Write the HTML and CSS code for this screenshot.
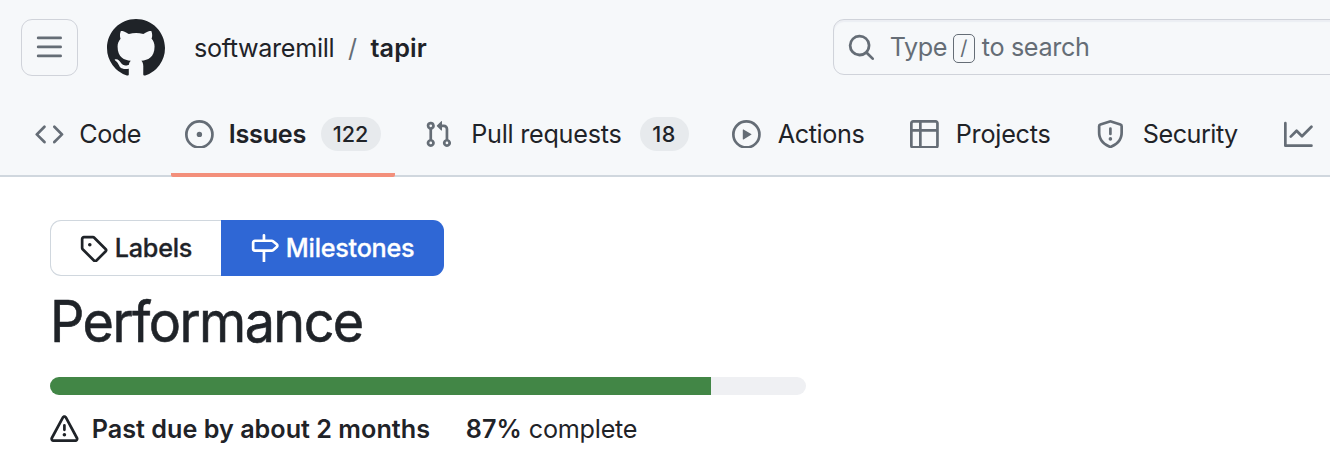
FILE: index.html
```html
<!DOCTYPE html>
<html lang="en">
<head>
<meta charset="utf-8">
<title>Performance Milestone · softwaremill/tapir</title>
<link rel="stylesheet" href="styles.css">
</head>
<body>
<header class="header">
  <div class="topbar">
    <button class="menu-button" aria-label="Menu"><svg class="icon" viewBox="0 0 16 16"><path d="M1 2.75A.75.75 0 0 1 1.75 2h12.5a.75.75 0 0 1 0 1.5H1.75A.75.75 0 0 1 1 2.75Zm0 5A.75.75 0 0 1 1.75 7h12.5a.75.75 0 0 1 0 1.5H1.75A.75.75 0 0 1 1 7.75ZM1.75 12h12.5a.75.75 0 0 1 0 1.5H1.75a.75.75 0 0 1 0-1.5Z"/></svg></button>
    <svg class="logo" viewBox="0 0 16 16"><path d="M8 0c4.42 0 8 3.58 8 8a8.013 8.013 0 0 1-5.45 7.59c-.4.08-.55-.17-.55-.38 0-.27.01-1.13.01-2.2 0-.75-.25-1.23-.54-1.48 1.78-.2 3.65-.88 3.65-3.95 0-.88-.31-1.59-.82-2.15.08-.2.36-1.02-.08-2.12 0 0-.67-.22-2.2.82-.64-.18-1.32-.27-2-.27-.68 0-1.36.09-2 .27-1.53-1.03-2.2-.82-2.2-.82-.44 1.1-.16 1.92-.08 2.12-.51.56-.82 1.28-.82 2.15 0 3.06 1.86 3.75 3.64 3.95-.23.2-.44.55-.51 1.07-.46.21-1.61.55-2.33-.66-.15-.24-.6-.83-1.23-.82-.67.01-.27.38.01.53.34.19.73.9.82 1.13.16.45.68 1.31 2.69.94 0 .67.01 1.3.01 1.49 0 .21-.15.45-.55.38A7.995 7.995 0 0 1 0 8c0-4.42 3.58-8 8-8Z"/></svg>
    <div class="crumbs"><span class="owner">softwaremill</span><span class="slash">/</span><strong class="repo">tapir</strong></div>
    <div class="search"><svg class="icon" viewBox="0 0 16 16"><path d="M10.68 11.74a6 6 0 0 1-7.922-8.982 6 6 0 0 1 8.982 7.922l3.04 3.04a.749.749 0 0 1-.326 1.275.749.749 0 0 1-.734-.215ZM11.5 7a4.499 4.499 0 1 0-8.997 0A4.499 4.499 0 0 0 11.5 7Z"/></svg><span class="type">Type</span><kbd class="key">/</kbd><span class="hint">to search</span></div>
  </div>
  <nav class="tabs">
    <a class="tab code"><svg class="icon" viewBox="0 0 16 16"><path d="m11.28 3.22 4.25 4.25a.75.75 0 0 1 0 1.06l-4.25 4.25a.749.749 0 0 1-1.275-.326.749.749 0 0 1 .215-.734L13.94 8l-3.72-3.72a.749.749 0 0 1 .326-1.275.749.749 0 0 1 .734.215Zm-6.56 0a.751.751 0 0 1 1.042.018.751.751 0 0 1 .018 1.042L2.06 8l3.72 3.72a.749.749 0 0 1-.326 1.275.749.749 0 0 1-.734-.215L.47 8.53a.75.75 0 0 1 0-1.06Z"/></svg><span>Code</span></a>
    <a class="tab issues"><svg class="icon" viewBox="0 0 16 16"><path d="M8 9.5a1.5 1.5 0 1 0 0-3 1.5 1.5 0 0 0 0 3Z"/><path d="M8 0a8 8 0 1 1 0 16A8 8 0 0 1 8 0ZM1.5 8a6.5 6.5 0 1 0 13 0 6.5 6.5 0 0 0-13 0Z"/></svg><span>Issues</span><span class="count">122</span></a>
    <a class="tab pulls"><svg class="icon" viewBox="0 0 16 16"><path d="M1.5 3.25a2.25 2.25 0 1 1 3 2.122v5.256a2.251 2.251 0 1 1-1.5 0V5.372A2.25 2.25 0 0 1 1.5 3.25Zm5.677-.177L9.573.677A.25.25 0 0 1 10 .854V2.5h1A2.5 2.5 0 0 1 13.5 5v5.628a2.251 2.251 0 1 1-1.5 0V5a1 1 0 0 0-1-1h-1v1.646a.25.25 0 0 1-.427.177L7.177 3.427a.25.25 0 0 1 0-.354ZM3.75 2.5a.75.75 0 1 0 0 1.5.75.75 0 0 0 0-1.5Zm0 9.5a.75.75 0 1 0 0 1.5.75.75 0 0 0 0-1.5Zm8.25.75a.75.75 0 1 0 1.5 0 .75.75 0 0 0-1.5 0Z"/></svg><span>Pull requests</span><span class="count">18</span></a>
    <a class="tab actions"><svg class="icon" viewBox="0 0 16 16"><path d="M8 0a8 8 0 1 1 0 16A8 8 0 0 1 8 0ZM1.5 8a6.5 6.5 0 1 0 13 0 6.5 6.5 0 0 0-13 0Zm4.879-2.773 4.264 2.559a.25.25 0 0 1 0 .428l-4.264 2.559A.25.25 0 0 1 6 10.559V5.442a.25.25 0 0 1 .379-.215Z"/></svg><span>Actions</span></a>
    <a class="tab projects"><svg class="icon" viewBox="0 0 16 16"><path d="M0 1.75C0 .784.784 0 1.75 0h12.5C15.216 0 16 .784 16 1.75v12.5A1.75 1.75 0 0 1 14.25 16H1.75A1.75 1.75 0 0 1 0 14.25ZM6.5 6.5v8h7.75a.25.25 0 0 0 .25-.25V6.5Zm8-1.5V1.75a.25.25 0 0 0-.25-.25H6.5V5Zm-13 1.5v7.75c0 .138.112.25.25.25H5v-8ZM5 5V1.5H1.75a.25.25 0 0 0-.25.25V5Z"/></svg><span>Projects</span></a>
    <a class="tab security"><svg class="icon" viewBox="0 0 16 16"><path d="M7.467.133a1.748 1.748 0 0 1 1.066 0l5.25 1.68A1.75 1.75 0 0 1 15 3.48V7c0 1.566-.32 3.182-1.303 4.682-.983 1.498-2.585 2.813-5.032 3.855a1.697 1.697 0 0 1-1.33 0c-2.447-1.042-4.049-2.357-5.032-3.855C1.32 10.182 1 8.566 1 7V3.48a1.75 1.75 0 0 1 1.217-1.667Zm.61 1.429a.25.25 0 0 0-.153 0l-5.25 1.68a.25.25 0 0 0-.174.238V7c0 1.358.275 2.666 1.057 3.86.784 1.194 2.121 2.34 4.366 3.297a.196.196 0 0 0 .154 0c2.245-.956 3.582-2.104 4.366-3.298C13.225 9.666 13.5 8.36 13.5 7V3.48a.251.251 0 0 0-.174-.237l-5.25-1.68ZM8.75 4.75v3a.75.75 0 0 1-1.5 0v-3a.75.75 0 0 1 1.5 0ZM9 10.5a1 1 0 1 1-2 0 1 1 0 0 1 2 0Z"/></svg><span>Security</span></a>
    <a class="tab insights"><svg class="icon" viewBox="0 0 16 16"><path d="M1.5 1.75V13.5h13.75a.75.75 0 0 1 0 1.5H.75a.75.75 0 0 1-.75-.75V1.75a.75.75 0 0 1 1.5 0Zm14.28 2.53-5.25 5.25a.75.75 0 0 1-1.06 0L7 7.06 4.28 9.78a.751.751 0 0 1-1.042-.018.751.751 0 0 1-.018-1.042l3.25-3.25a.75.75 0 0 1 1.06 0L10 7.94l4.72-4.72a.751.751 0 0 1 1.042.018.751.751 0 0 1 .018 1.042Z"/></svg></a>
  </nav>
</header>
<main class="content">
  <div class="subnav">
    <a class="subnav-item labels"><svg class="icon" viewBox="0 0 16 16"><path d="M1 7.775V2.75C1 1.784 1.784 1 2.75 1h5.025c.464 0 .91.184 1.238.513l6.25 6.25a1.75 1.75 0 0 1 0 2.474l-5.026 5.026a1.75 1.75 0 0 1-2.474 0l-6.25-6.25A1.752 1.752 0 0 1 1 7.775Zm1.5 0c0 .066.026.13.073.177l6.25 6.25a.25.25 0 0 0 .354 0l5.025-5.025a.25.25 0 0 0 0-.354l-6.25-6.25a.25.25 0 0 0-.177-.073H2.75a.25.25 0 0 0-.25.25ZM6 5a1 1 0 1 1 0 2 1 1 0 0 1 0-2Z"/></svg><span>Labels</span></a>
    <a class="subnav-item milestones"><svg class="icon" viewBox="0 0 16 16"><path d="M7.75 0a.75.75 0 0 1 .75.75V3h3.634c.414 0 .814.147 1.13.414l2.07 1.75a1.75 1.75 0 0 1 0 2.672l-2.07 1.75a1.75 1.75 0 0 1-1.13.414H8.5v5.25a.75.75 0 0 1-1.5 0V10H2.75A1.75 1.75 0 0 1 1 8.25v-3.5C1 3.784 1.784 3 2.75 3H7V.75A.75.75 0 0 1 7.75 0Zm4.384 8.5a.25.25 0 0 0 .161-.06l2.07-1.75a.248.248 0 0 0 0-.38l-2.07-1.75a.25.25 0 0 0-.161-.06H2.75a.25.25 0 0 0-.25.25v3.5c0 .138.112.25.25.25Z"/></svg><span>Milestones</span></a>
  </div>
  <h1 class="title">Performance</h1>
  <div class="progress"><div class="progress-value" style="width: 87.4%"></div></div>
  <div class="status">
    <svg class="icon" viewBox="0 0 16 16"><path d="M6.457 1.047c.659-1.234 2.427-1.234 3.086 0l6.082 11.378A1.75 1.75 0 0 1 14.082 15H1.918a1.75 1.75 0 0 1-1.543-2.575Zm1.763.707a.25.25 0 0 0-.44 0L1.698 13.132a.25.25 0 0 0 .22.368h12.164a.25.25 0 0 0 .22-.368Zm.53 3.996v2.5a.75.75 0 0 1-1.5 0v-2.5a.75.75 0 0 1 1.5 0ZM9 11a1 1 0 1 1-2 0 1 1 0 0 1 2 0Z"/></svg>
    <strong class="due">Past due by about 2 months</strong>
    <strong class="percent">87%</strong>
    <span class="complete">complete</span>
  </div>
</main>
</body>
</html>
```
FILE: styles.css
```css
* { box-sizing: border-box; }
body {
  margin: 0;
  width: 1330px;
  height: 464px;
  overflow: hidden;
  background: #fff;
  color: #1f2328;
  font: 400 25.2px/36px Inter, "Liberation Sans", sans-serif;
  letter-spacing: -0.25px;
  white-space: nowrap;
}
.icon { width: 28.8px; height: 28.8px; flex: none; fill: #656d76; }
.header {
  height: 177px;
  background: linear-gradient(#d0d7de, #d0d7de) bottom / 100% 2px no-repeat #f6f8fa;
  overflow: hidden;
}
.topbar { display: flex; height: 95px; padding: 19px 0 0 21px; }
.topbar > * { flex: none; }
.menu-button {
  display: flex;
  align-items: center;
  justify-content: center;
  width: 57px;
  height: 57px;
  padding: 0;
  border: 1px solid #d0d3da;
  border-radius: 11px;
  background: transparent;
}
.logo { width: 58px; height: 58px; margin-left: 29px; fill: #1f2328; }
.crumbs { display: flex; height: 36px; margin: 11px 0 0 29px; width: 639px; }
.owner { width: 154px; letter-spacing: -0.35px; }
.slash { width: 22.5px; color: #656d76; }
.repo { font-weight: 600; letter-spacing: 0.1px; }
.search {
  display: flex;
  align-items: center;
  width: 520px;
  height: 56px;
  padding-left: 13px;
  border: 1px solid #d0d3da;
  border-radius: 11px;
  box-shadow: inset 0 2px 1px #eceef3;
  color: #656d76;
}
.type { width: 63px; margin-left: 14px; letter-spacing: -0.4px; }
.key {
  width: 22px;
  height: 29px;
  margin-top: 2px;
  border: 1px solid #656d76;
  border-radius: 5px;
  font: 400 20px/27px Inter, sans-serif;
  text-align: center;
}
.hint { margin-left: 7px; letter-spacing: -0.35px; }
.tabs { display: flex; height: 82px; padding-left: 35px; }
.tab { display: flex; align-items: center; height: 82px; padding-bottom: 4px; flex: none; }
.tab .icon { margin-right: 15.5px; }
.code { width: 136.4px; letter-spacing: -0.5px; }
.issues {
  width: 224px;
  padding-left: 13.6px;
  background: linear-gradient(#f38f7b, #f38f7b) bottom / 100% 4px no-repeat;
  border-radius: 0 0 2px 2px;
  font-weight: 600;
}
.issues .icon { margin-right: 15px; }
.count {
  width: 60px;
  height: 34px;
  margin-left: 14.5px;
  border-radius: 17px;
  background: #e7eaed;
  font-size: 21.6px;
  font-weight: 500;
  line-height: 34px;
  letter-spacing: 0;
  text-align: center;
}
.pulls { width: 336.6px; padding-left: 28.6px; }
.pulls .icon { margin-right: 18.4px; }
.pulls .count { width: 49px; margin-left: 18px; letter-spacing: 0.5px; }
.actions { width: 178px; letter-spacing: -0.4px; }
.actions .icon { margin-right: 17px; }
.projects { width: 186px; }
.projects .icon { margin-right: 17px; }
.security { width: 188px; letter-spacing: -0.5px; }
.security .icon { margin-right: 18px; }
.content { padding: 43px 50px 0; }
.subnav { display: flex; height: 56px; font-weight: 500; -webkit-text-stroke: 0.3px; }
.subnav-item { display: flex; align-items: center; height: 56px; padding-left: 29px; }
.subnav .icon { margin-right: 7px; }
.labels { width: 171px; padding-left: 28px; border: 1px solid #d0d7de; border-right: 0; border-radius: 11px 0 0 11px; }
.labels .icon, .status .icon { fill: #1f2328; }
.milestones { width: 223px; border-radius: 0 11px 11px 0; background: #2f67d5; color: #fff; }
.milestones .icon { fill: #fff; }
.title {
  margin: 9.5px 0 0;
  height: 72px;
  font-size: 57px;
  line-height: 72px;
  font-weight: 400;
  letter-spacing: -1.65px;
  -webkit-text-stroke: 0.6px;
  transform: scaleX(0.945);
  transform-origin: left;
}
.progress { width: 756px; height: 18px; margin-top: 19.5px; border-radius: 9px; overflow: hidden; background: #eff0f3; }
.progress-value { height: 18px; background: #428646; }
.status { display: flex; align-items: center; height: 36px; margin-top: 16px; }
.due { width: 374px; margin-left: 13px; font-weight: 600; letter-spacing: 0; }
.percent { width: 63px; font-weight: 600; letter-spacing: 0; }
```
